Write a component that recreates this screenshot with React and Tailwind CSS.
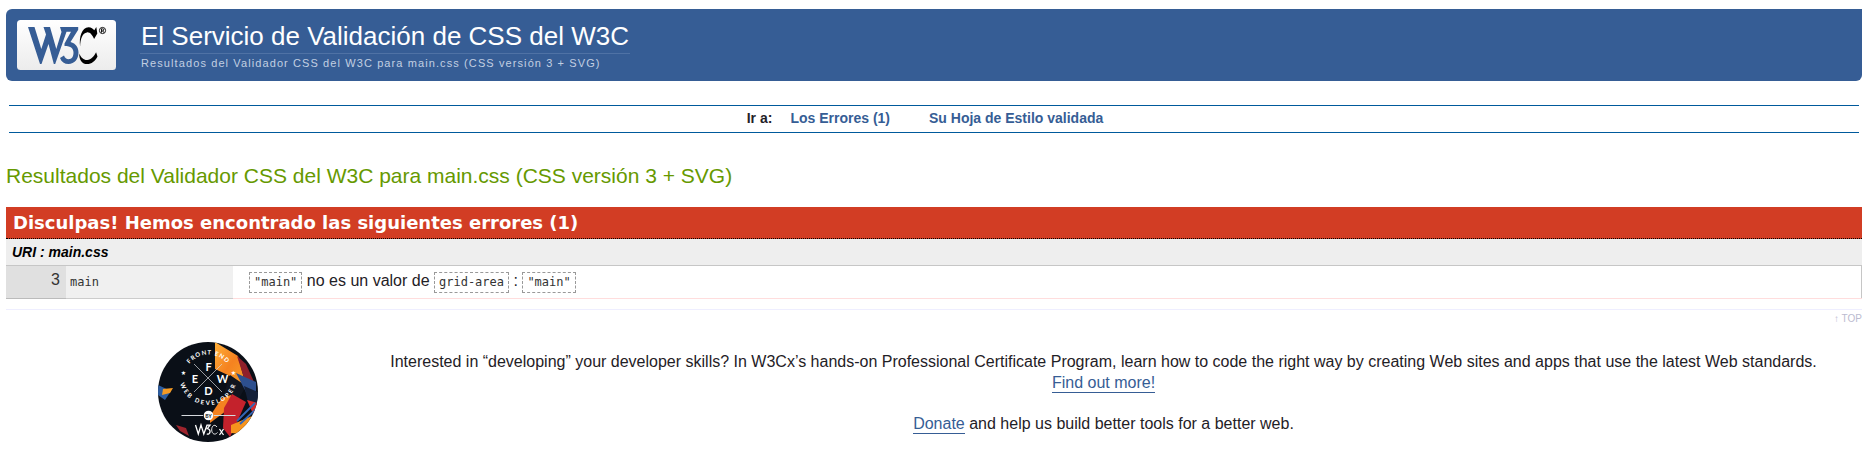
function W3CLogo() {
  return (
    <svg viewBox="0 0 99 50" className="block h-[50px] w-[99px]" role="img" aria-label="W3C">
      <defs>
        <linearGradient id="plate" x1="0" y1="0" x2="0" y2="1">
          <stop offset="0" stopColor="#ffffff" />
          <stop offset="1" stopColor="#ececec" />
        </linearGradient>
      </defs>
      <rect width="99" height="50" rx="3.5" fill="url(#plate)" />
      <path
        fill="#365d95"
        d="M11 7H17.500L24.300 29 29 14.500 26.500 7H33L39.300 29 44.500 12 43 7H61.200V9.800L53.500 22C59 23.500 61.500 27.500 61.500 32.500 61.500 39 57.500 44 51.500 44 47.500 44 44.500 42 43 38L47 35.500C48 38 49.500 39.300 51.500 39.300 54.800 39.300 56.500 36.500 56.500 32.800 56.500 28.500 54 26 47.500 26V23.500L54 11.800H49.500L38.200 44H36.800L31.500 24 24.500 44H23Z"
      />
      <path
        fill="#000"
        d="M79.300 7l1 6.500-3.200 5.500c-1.800-4-4-7-7.200-6.600-4.300.6-6.500 6-6.800 14.100-1.200-9.800 1.700-18.800 8.400-19.300 2.500-.1 4.600 1.400 5.800 3zM62.300 33.500c1.700 4.300 4.600 6.700 7.900 6.500 3.900-.2 6.700-3.700 8.900-7.800l1.400 4.400c-2.500 4.900-6 7.500-10.300 7.500-5 0-8.200-3.900-7.900-10.600z"
      />
      <circle cx="85.500" cy="10.500" r="3.100" fill="none" stroke="#000" strokeWidth="0.900" />
      <path d="M84.500 12.600V8.800h1.200a1 1 0 0 1 0 2.100h-1.200m1.200 0 1.100 1.700" fill="none" stroke="#000" strokeWidth="0.900" />
    </svg>
  );
}

function CourseBadge() {
  return (
    <svg viewBox="0 0 100 100" className="block h-[100px] w-[100px]" role="img" aria-label="Front End Web Developer by W3Cx">
      <defs>
        <clipPath id="disc"><circle cx="50" cy="50" r="50" /></clipPath>
        <linearGradient id="flame" x1="0" y1="0" x2="1" y2="1">
          <stop offset="0" stopColor="#ffb03a" />
          <stop offset="0.500" stopColor="#f58220" />
          <stop offset="1" stopColor="#f7a128" />
        </linearGradient>
        <path id="arcTop" d="M26.300 36.600A24 24 0 0 1 74.300 36.600" />
        <path id="arcBottom" d="M21.300 34A29 29 0 1 0 79.300 34" />
      </defs>
      <g clipPath="url(#disc)">
        <rect width="100" height="100" fill="#0a0f17" />
        <path d="M57 0 80 14 88 44 72 34 57 27z" fill="url(#flame)" />
        <path d="M72 33 88 44 78 62 66 52z" fill="#10151f" />
        <path d="M79 14 88 22 96 40 86 36z" fill="#8f1f2a" />
        <path d="M78 31 98 40V54L88 50z" fill="#2d4f8e" />
        <path d="M86 44 100 50V66L90 60z" fill="#142038" />
        <path d="M64 56 73 53 72 66 52 81V74z" fill="#f58220" />
        <path d="M74 52 88 60 80 78 72 95 65 86 66 66z" fill="#c4222c" />
        <path d="M89 58 100 61 96 74z" fill="#d92b2c" />
        <path d="M73 83 94 74 84 92 73 91z" fill="#f7941d" />
        <path d="M79 79 97 61M82 82 99 66" stroke="#3566b5" strokeWidth="1.800" />
        <path d="M0 43 13 49 7 58 0 53z" fill="#2e5d9f" />
        <path d="M5 47 15 46 12 51 4 53z" fill="#f59a23" />
        <path d="M18 83 28 86 31 94 22 89z" fill="#9d242d" />
      </g>
      <g stroke="#d6d9dd" strokeWidth="0.700">
        <path d="M36 22 64 50M64 22 36 50" />
        <path d="M23.500 73.500H45M56 73.500H77.500" strokeWidth="1" />
      </g>
      <g fill="#fff" fontFamily="Lato, 'Open Sans', sans-serif" fontWeight="700" textAnchor="middle">
        <g fontSize="11">
          <text x="50.500" y="29">F</text>
          <text x="37" y="41">E</text>
          <text x="64.500" y="41">W</text>
          <text x="50.500" y="53">D</text>
        </g>
        <text fontSize="6" letterSpacing="1"><textPath href="#arcTop" startOffset="50%">FRONT END</textPath></text>
        <text fontSize="6" letterSpacing="2"><textPath href="#arcBottom" startOffset="50%">WEB DEVELOPER</textPath></text>
        <text x="25.500" y="33" fontSize="6" fontFamily="DejaVu Sans, sans-serif">★</text>
        <text x="75.500" y="33" fontSize="6" fontFamily="DejaVu Sans, sans-serif">★</text>
        <circle cx="50.500" cy="73.500" r="4.800" />
        <text x="50.500" y="75.500" fontSize="5" fill="#10141b">BY</text>
      </g>
      <g fill="none" stroke="#fff" strokeWidth="1.300">
        <path d="M37.500 83 40.300 92 43 83 45.800 92 49 83.200H52L49.300 86.700C53.500 87.200 52.500 93 48.800 92" />
        <path d="M59 85C56.500 81.500 53.500 84 53.700 88S57 93.500 59.500 90.500" strokeWidth="0.900" />
        <path d="M61.500 87 65.500 93M65.500 87 61.500 93" />
      </g>
    </svg>
  );
}

function Value({ children }) {
  return (
    <code className="inline-block border border-dashed border-[#999] px-1 py-[2px] font-['DejaVu_Sans_Mono',monospace] text-[12px] leading-[15px] text-[#333]">
      {children}
    </code>
  );
}

const link = "inline-block leading-[18px] border-b border-[#365d95] text-[#365d95]";

export default function App() {
  return (
    <div className="bg-white pt-[9px] pr-[11px] pb-6 pl-[6px] font-['Liberation_Sans',Arial,sans-serif] text-[16px] leading-[21px] text-[#1f2126]">
      <header className="flex items-start rounded-l-md rounded-br-md bg-[#365d95] pt-[11px] pb-[9px] pl-[11px]">
        <a href="#inicio"><W3CLogo /></a>
        <div className="ml-[24px]">
          <h1 className="border-b border-[#4f72a5] px-px text-[26px] leading-[33px] text-white">
            El Servicio de Validación de CSS del W3C
          </h1>
          <p className="px-px text-[11px] leading-[18px] tracking-widest text-[#c2cfe2]">
            Resultados del Validador CSS del W3C para main.css (CSS versión 3 + SVG)
          </p>
        </div>
      </header>

      <nav className="mx-[3px] mt-6 flex justify-center gap-[18px] border-y border-[#005a9c] pt-px pr-[18px] pb-[3px] text-[14px] leading-[22px] font-bold">
        <span>Ir a:</span>
        <a href="#errors" className="mr-[21px] text-[#365d95]">Los Errores (1)</a>
        <a href="#css" className="text-[#365d95]">Su Hoja de Estilo validada</a>
      </nav>

      <main>
        <h2 className="mt-[30px] text-[21px] leading-[26px] text-[#690]">
          Resultados del Validador CSS del W3C para main.css (CSS versión 3 + SVG)
        </h2>
        <section id="errors" className="mt-[18px]">
          <h3 className="border-b border-dotted border-black bg-[#d23d24] px-[7px] font-['DejaVu_Sans',sans-serif] text-[18px] leading-[31px] font-bold text-white">
            Disculpas! Hemos encontrado las siguientes errores (1)
          </h3>
          <h4 className="bg-[#eee] px-[6px] text-[14px] leading-[26px] font-bold text-black italic">URI : main.css</h4>
          <table className="w-full border-collapse">
            <tbody>
              <tr className="h-[33px] border-t border-[#c6c6c6]">
                <td className="w-[60px] border-b border-[#bbb] bg-[#e0e0e0] pr-[6px] pb-[6px] text-right align-middle text-[#333]">3</td>
                <td className="w-[167px] border-b border-[#ccc] bg-[#f0f0f0] px-1 align-middle font-['DejaVu_Sans_Mono',monospace] text-[12px] text-[#333]">main</td>
                <td className="border-r border-b border-r-[#c6c6c6] border-b-[#fdd] pb-[2px] pl-4 align-middle leading-[21px]">
                  <Value>"main"</Value> no es un valor de <Value>grid-area</Value> : <Value>"main"</Value>
                </td>
              </tr>
            </tbody>
          </table>
        </section>
        <p className="mt-[10px] border-t border-[#eef] text-right text-[10px] leading-[18px] text-[#bbbbd0]">
          <a href="#inicio">↑ TOP</a>
        </p>
      </main>

      <footer className="mt-[14px] flex items-start pl-[152px]">
        <CourseBadge />
        <div className="ml-[87px] flex-1 pt-[9px] text-center">
          <p>
            Interested in “developing” your developer skills? In W3Cx’s hands-on Professional Certificate Program, learn how to code the right way by creating Web sites and apps that use the latest Web standards.{" "}
            <a href="#w3cx" className={link}>Find out more!</a>
          </p>
          <p className="mt-5">
            <a href="#donate" className={link}>Donate</a> and help us build better tools for a better web.
          </p>
        </div>
      </footer>
    </div>
  );
}
